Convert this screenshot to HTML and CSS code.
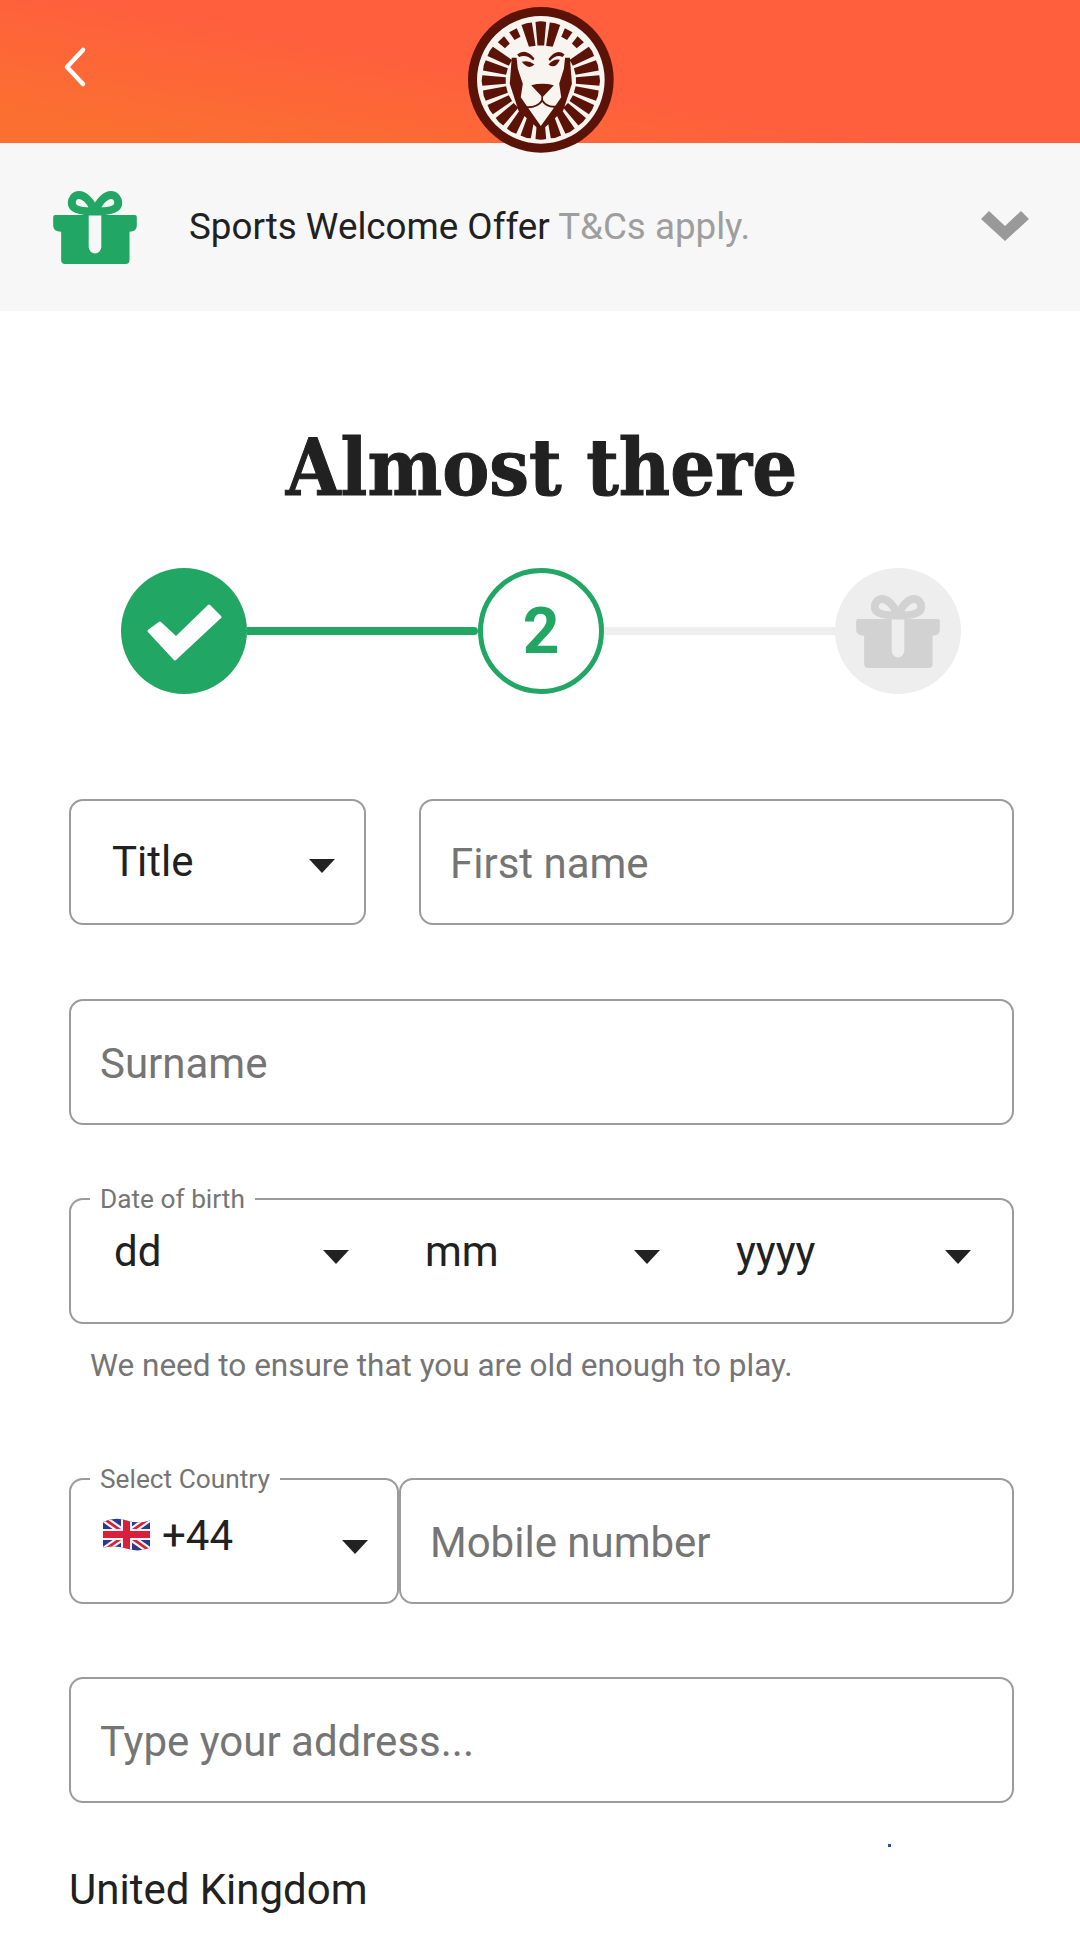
FILE: index.html
```html
<!DOCTYPE html>
<html lang="en">
<head>
<meta charset="utf-8">
<title>Almost there</title>
<link rel="stylesheet" href="styles.css">
</head>
<body>
<header class="topbar">
  <svg class="back" viewBox="0 0 30 44"><path d="M24 5 8 22 24 39"/></svg>
  <svg class="logo" viewBox="85 20 437 437">
    <defs>
      <path id="ray" d="M287 65Q303 61 319 65L313 135H293Z"/>
      <path id="dia" d="M290 68 316 68 313 96 293 96Z"/>
    </defs>
    <circle cx="303" cy="238" r="218" fill="#5b1308"/>
    <circle cx="303" cy="238" r="191" fill="#f8f4f0"/>
    <g fill="#5b1308">
      <use href="#ray"/>
      <use href="#ray" transform="rotate(14 303 240)"/>
      <use href="#ray" transform="rotate(-14 303 240)"/>
      <use href="#dia" transform="rotate(29 303 240)"/>
      <use href="#dia" transform="rotate(-29 303 240)"/>
      <use href="#dia" transform="rotate(44 303 240)"/>
      <use href="#dia" transform="rotate(-44 303 240)"/>
      <use href="#ray" transform="rotate(60 303 240)"/>
      <use href="#ray" transform="rotate(-60 303 240)"/>
      <use href="#ray" transform="rotate(75 303 240)"/>
      <use href="#ray" transform="rotate(-75 303 240)"/>
      <use href="#ray" transform="rotate(90 303 240)"/>
      <use href="#ray" transform="rotate(-90 303 240)"/>
      <use href="#ray" transform="rotate(105 303 240)"/>
      <use href="#ray" transform="rotate(-105 303 240)"/>
      <use href="#ray" transform="rotate(120 303 240)"/>
      <use href="#ray" transform="rotate(-120 303 240)"/>
      <use href="#ray" transform="rotate(135 303 240)"/>
      <use href="#ray" transform="rotate(-135 303 240)"/>
      <use href="#ray" transform="rotate(150 303 240)"/>
      <use href="#ray" transform="rotate(-150 303 240)"/>
      <use href="#ray" transform="rotate(165 303 240)"/>
      <use href="#ray" transform="rotate(-165 303 240)"/>
      <use href="#ray" transform="rotate(180 303 240)"/>
      <path d="M216 172 390 172 396 250 370 330 303 392 236 330 210 250Z"/>
    </g>
    <path fill="#f8f4f0" d="M228 150Q265 132 303 142Q342 132 378 150L372 205 358 250 364 290 345 318 303 376 262 318 243 290 249 250 234 205Z"/>
    <g fill="#5b1308">
      <path d="M232 162Q258 142 284 174L280 180Q258 160 238 170Z"/>
      <path d="M374 162Q350 142 326 176L330 182Q350 160 368 170Z"/>
      <path d="M246 184Q266 178 284 192Q266 210 246 184Z"/>
      <path d="M360 178Q342 174 326 192Q346 208 360 178Z"/>
      <path d="M274 254Q307 246 342 254L308 290Z"/>
    </g>
    <g fill="none" stroke="#5b1308" stroke-linecap="round" stroke-linejoin="round">
      <path stroke-width="6" d="M260 320Q292 322 307 300Q322 322 350 318"/>
      <path stroke-width="5" d="M307 280V302"/>
    </g>
  </svg>
</header>

<section class="offer">
  <svg class="gift gift-green" viewBox="0 0 252 220">
    <path fill-rule="evenodd" d="M6 72H246Q252 72 252 78V105Q252 123 230 123V208Q230 220 218 220H36Q24 220 24 208V123Q0 123 0 105V78Q0 72 6 72ZM107 72V169A19 19 0 0 0 145 169V72Z"/>
    <path class="bow" d="M126 62C112 26 92 12 78 12 64 12 56 24 56 36 56 54 78 62 126 62ZM126 62C140 26 160 12 174 12 188 12 196 24 196 36 196 54 174 62 126 62Z"/>
  </svg>
  <p class="offer-text">Sports Welcome Offer <span class="offer-muted">T&amp;Cs apply.</span></p>
  <svg class="chevron" viewBox="0 0 48 30"><path d="M0 8 8 0 24 15 40 0 48 8 24 30Z"/></svg>
</section>

<main class="content">
  <h1 class="heading">Almost there</h1>

  <div class="stepper">
    <span class="step step-done">
      <svg class="check" viewBox="0 0 126 126"><path d="M28 63 39 55 55 70 88 38 99 49 54 91Z"/></svg>
    </span>
    <span class="line line-done"></span>
    <span class="step step-current">2</span>
    <span class="line"></span>
    <span class="step step-todo">
      <svg class="gift" viewBox="0 0 252 220">
        <path fill-rule="evenodd" d="M6 72H246Q252 72 252 78V105Q252 123 230 123V208Q230 220 218 220H36Q24 220 24 208V123Q0 123 0 105V78Q0 72 6 72ZM107 72V169A19 19 0 0 0 145 169V72Z"/>
        <path class="bow" d="M126 62C112 26 92 12 78 12 64 12 56 24 56 36 56 54 78 62 126 62ZM126 62C140 26 160 12 174 12 188 12 196 24 196 36 196 54 174 62 126 62Z"/>
      </svg>
    </span>
  </div>

  <form class="form">
    <div class="row row-name">
      <div class="field field-title">
        <span class="value">Title</span>
        <span class="caret"></span>
      </div>
      <div class="field"><span class="placeholder">First name</span></div>
    </div>

    <div class="field"><span class="placeholder">Surname</span></div>

    <div class="group">
      <div class="field field-dob">
        <span class="legend">Date of birth</span>
        <div class="dob-part"><span class="value">dd</span><span class="caret"></span></div>
        <div class="dob-part"><span class="value">mm</span><span class="caret"></span></div>
        <div class="dob-part"><span class="value">yyyy</span><span class="caret"></span></div>
      </div>
      <p class="help">We need to ensure that you are old enough to play.</p>
    </div>

    <div class="row row-phone">
      <div class="field field-country">
        <span class="legend">Select Country</span>
        <svg class="flag" viewBox="0 0 60 42">
          <defs><clipPath id="wave"><path d="M0 5Q15-2 30 3T60 3V38Q45 44 30 39T0 38Z"/></clipPath></defs>
          <g clip-path="url(#wave)">
            <rect width="60" height="42" fill="#2b3a86"/>
            <path d="M0 0 60 42M60 0 0 42" stroke="#f4f4f8" stroke-width="9"/>
            <path d="M0 0 60 42M60 0 0 42" stroke="#d8203a" stroke-width="3.5"/>
            <path d="M30 0V42M0 21H60" stroke="#f4f4f8" stroke-width="14"/>
            <path d="M30 0V42M0 21H60" stroke="#d8203a" stroke-width="9"/>
          </g>
        </svg>
        <span class="value dial">+44</span>
        <span class="caret"></span>
      </div>
      <div class="field field-mobile"><span class="placeholder">Mobile number</span></div>
    </div>

    <div class="field field-address">
      <span class="placeholder">Type your address...</span>
      <span class="speck"></span>
    </div>
  </form>

  <p class="country">United Kingdom</p>
</main>
</body>
</html>
```
FILE: styles.css
```css
* { box-sizing: border-box; }
html, body { margin: 0; padding: 0; }
body {
  width: 1080px;
  height: 1942px;
  overflow: hidden;
  background: #fff;
  color: #212121;
  font-family: Roboto, "Liberation Sans", sans-serif;
}
p, h1 { margin: 0; }

.topbar {
  position: relative;
  height: 143px;
  background: linear-gradient(190deg, #ff5f3d 0%, #ff5f3d 52%, #fb7030 92%);
  display: flex;
  align-items: flex-start;
  padding: 45px 0 0 59px;
}
.back { width: 30px; height: 44px; }
.back path { fill: none; stroke: #fff; stroke-width: 4.5; stroke-linecap: round; stroke-linejoin: round; }
.logo {
  position: absolute;
  left: 468px;
  top: 7px;
  width: 146px;
  height: 146px;
  z-index: 1;
}

.offer {
  height: 168px;
  background: #f7f7f7;
  display: flex;
  align-items: center;
  padding: 0 51px 0 53px;
}
.gift { width: 84px; height: 73px; fill: currentColor; flex: none; }
.gift .bow { fill: none; stroke: currentColor; stroke-width: 24; }
.gift-green { color: #21a663; }
.offer-text { margin-left: 52px; padding-bottom: 2px; font-size: 36.75px; color: #212121; }
.offer-muted { color: #9e9e9e; }
.chevron { width: 48px; height: 30px; margin-left: auto; margin-bottom: 2px; fill: #999; }

.content { padding: 107px 66px 0 69px; }
.heading {
  height: 100px;
  line-height: 100px;
  text-align: center;
  font-family: "DejaVu Serif", "Liberation Serif", serif;
  font-stretch: condensed;
  font-weight: 700;
  font-size: 78.5px;
  -webkit-text-stroke: 1px #212121;
  color: #212121;
}

.stepper {
  display: flex;
  align-items: center;
  margin: 50px 53px 105px 52px;
}
.step {
  flex: none;
  width: 126px;
  height: 126px;
  border-radius: 50%;
  display: flex;
  align-items: center;
  justify-content: center;
}
.step-done { background: #21a663; }
.check { width: 126px; height: 126px; fill: #fff; stroke: #fff; stroke-width: 3; stroke-linejoin: round; }
.step-current {
  border: 5px solid #21a663;
  color: #21a663;
  font-weight: 700;
  font-size: 64px;
}
.step-todo { background: #eeeeee; color: #d2d2d2; }
.line { flex: 1; height: 8px; background: #eeeeee; }
.line-done { background: #21a663; border-radius: 0 4px 4px 0; }

.form { display: flex; flex-direction: column; gap: 73.5px; }
.row { display: grid; }
.row-name { grid-template-columns: 297px 595px; column-gap: 53px; }
.row-phone { grid-template-columns: 330px 615px; }

.field {
  position: relative;
  height: 126px;
  border: 2px solid #9c9c9c;
  border-radius: 14px;
  display: flex;
  align-items: center;
  padding-left: 29px;
  background: #fff;
}
.placeholder { font-size: 42px; color: #757575; padding-top: 3px; }
.value { font-size: 42px; color: #212121; }
.caret {
  width: 0;
  height: 0;
  border-left: 13px solid transparent;
  border-right: 13px solid transparent;
  border-top: 14px solid #222;
}

.field-title { padding-left: 41px; }
.field-title .value { flex: 1; padding-bottom: 2px; }
.field-title .caret { margin: 8px 29px 0 0; }

.legend {
  position: absolute;
  left: 19px;
  top: -14px;
  padding: 0 10px;
  background: #fff;
  font-size: 26.25px;
  line-height: 26px;
  color: #757575;
}

.group { display: flex; flex-direction: column; }
.field-dob { display: grid; grid-template-columns: 311px 311px 260px; padding-left: 43px; align-items: start; padding-top: 27px; }
.dob-part { display: flex; align-items: flex-start; }
.dob-part .value { width: 209px; }
.dob-part .caret { margin-top: 23px; }
.help { margin: 24px 0 20px 21px; font-size: 31.5px; line-height: 36px; color: #757575; }

.field-country { padding-left: 32px; }
.flag { width: 47px; height: 33px; flex: none; margin-bottom: 13px; }
.dial { margin-left: 12px; margin-bottom: 10px; flex: 1; }
.field-country .caret { margin: 12px 29px 0 0; }

.speck {
  position: absolute;
  left: 817px;
  top: 165px;
  width: 3px;
  height: 3px;
  background: #2a4fa8;
}

.country { margin-top: 60px; font-size: 42px; line-height: 54px; color: #212121; }
```
